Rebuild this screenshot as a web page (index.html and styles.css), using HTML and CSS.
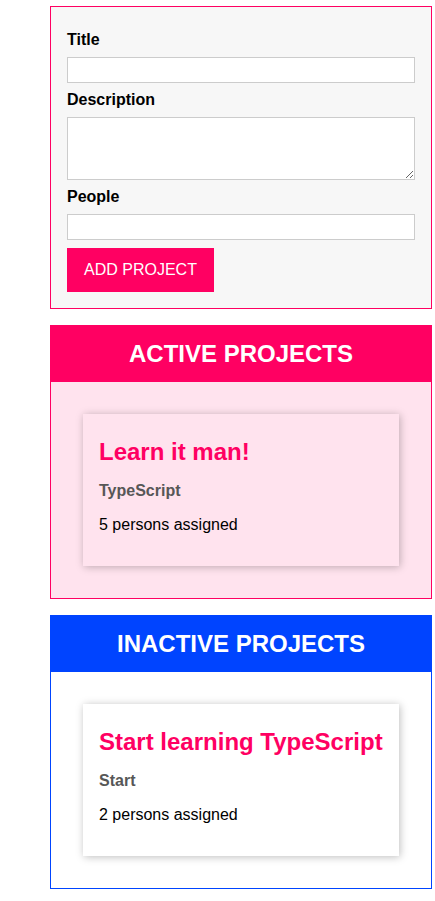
FILE: index.html
```html
<!DOCTYPE html>
<html lang="en">
<head>
<meta charset="utf-8">
<title>ProjectManager</title>
<link rel="stylesheet" href="styles.css">
</head>
<body>
<div class="app">
  <form class="user-input">
    <label class="field-label" for="title">Title</label>
    <input class="field" type="text" id="title">
    <label class="field-label" for="description">Description</label>
    <textarea class="field field-area" id="description" rows="3"></textarea>
    <label class="field-label" for="people">People</label>
    <input class="field" type="number" id="people">
    <button class="submit" type="submit">ADD PROJECT</button>
  </form>

  <section class="projects projects-active">
    <header class="projects-header">
      <h2 class="projects-title">ACTIVE PROJECTS</h2>
    </header>
    <ul class="project-list droppable">
      <li class="project-item">
        <h2 class="project-name">Learn it man!</h2>
        <h3 class="project-desc">TypeScript</h3>
        <p class="project-people">5 persons assigned</p>
      </li>
    </ul>
  </section>

  <section class="projects projects-finished">
    <header class="projects-header">
      <h2 class="projects-title">INACTIVE PROJECTS</h2>
    </header>
    <ul class="project-list">
      <li class="project-item">
        <h2 class="project-name">Start learning TypeScript</h2>
        <h3 class="project-desc">Start</h3>
        <p class="project-people">2 persons assigned</p>
      </li>
    </ul>
  </section>
</div>
</body>
</html>
```

FILE: styles.css
```css
* {
  box-sizing: border-box;
}

html {
  font-family: "Liberation Sans", Arial, sans-serif;
  font-size: 16px;
}

body {
  margin: 0;
  background: #ffffff;
}

.app {
  width: 382px;
  margin: 6px 0 0 50px;
}

.user-input {
  border: 1px solid #ff0062;
  background: #f7f7f7;
  padding: 16px;
  margin: 0 0 16px 0;
}

.field-label {
  display: block;
  font-weight: bold;
  line-height: 18px;
  margin: 8px 0;
  color: #000;
}

.field {
  display: block;
  width: 100%;
  height: 26px;
  margin: 8px 0;
  padding: 3px 6px;
  font: inherit;
  border: 1px solid #cccccc;
  background: #ffffff;
}

.field-area {
  height: 63px;
  resize: vertical;
}

.submit {
  display: block;
  margin: 8px 0 0 0;
  font: inherit;
  line-height: 18.4px;
  background: #ff0062;
  border: 1px solid #ff0062;
  color: #ffffff;
  padding: 12px 16px;
  cursor: pointer;
}

.projects {
  border: 1px solid #ff0062;
  margin: 0 0 16px 0;
}

.projects-header {
  background: #ff0062;
  height: 56px;
  display: flex;
  justify-content: center;
  align-items: center;
}

.projects-title {
  margin: 0;
  color: #ffffff;
  font-size: 24px;
  font-weight: bold;
}

.projects-finished {
  border-color: #0044ff;
}

.projects-finished .projects-header {
  background: #0044ff;
}

.project-list {
  list-style: none;
  margin: 0;
  padding: 16px;
}

.droppable {
  background: #ffe3ee;
}

.project-item {
  box-shadow: 1px 1px 8px rgba(0, 0, 0, 0.26);
  padding: 16px;
  margin: 16px;
}

.project-name {
  color: #ff0062;
  font-size: 24px;
  font-weight: bold;
  margin: 8px 0;
}

.project-desc {
  color: #575757;
  font-size: 16px;
  font-weight: bold;
  margin: 16px 0;
}

.project-people {
  margin: 16px 0;
  color: #000;
}
```
